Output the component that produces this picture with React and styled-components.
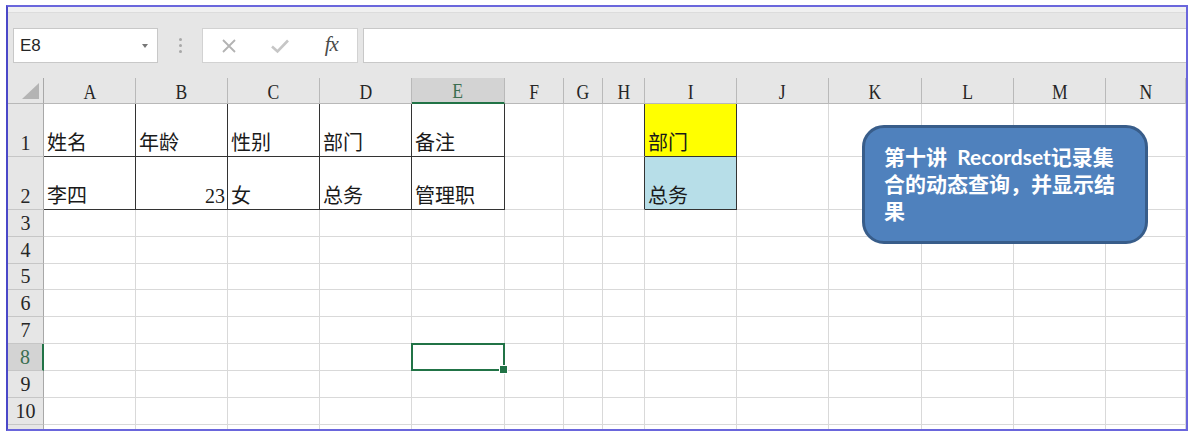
import React from 'react';
import styled, { createGlobalStyle, css } from 'styled-components';

const GlobalStyle = createGlobalStyle`
  * { box-sizing: border-box; }
  html, body { margin: 0; padding: 0; background: #fff; }
  body { font-family: "Liberation Sans", "Noto Sans CJK SC", sans-serif; }
`;

const columns = ['A', 'B', 'C', 'D', 'E', 'F', 'G', 'H', 'I', 'J', 'K', 'L', 'M', 'N'];
const colWidths = [36, 92, 92, 92, 92, 93, 59, 39, 42, 92, 92, 93, 92, 92, '1fr'];
const rowHeights = [26, 53, 53, 27, 27, 26, 27, 27, 27, 27, 27, 10];

const cellData = {
  A1: { text: '姓名' },
  B1: { text: '年龄' },
  C1: { text: '性别' },
  D1: { text: '部门' },
  E1: { text: '备注' },
  A2: { text: '李四' },
  B2: { text: '23', right: true },
  C2: { text: '女' },
  D2: { text: '总务' },
  E2: { text: '管理职' },
  I1: { text: '部门', fill: '#ffff00' },
  I2: { text: '总务', fill: '#b7dee8' },
};

const boxed = (col, row) => {
  const c = columns.indexOf(col);
  if (row >= 1 && row <= 2 && c >= 0 && c <= 4) return true;
  if (col === 'I' && (row === 1 || row === 2)) return true;
  return false;
};

const activeCol = 'E';
const activeRow = 8;
const visibleRows = 10;

function App() {
  // one extra row is only partly visible at the bottom edge
  const rows = Array.from({ length: visibleRows + 1 }, (_, i) => i + 1);
  return (
    <>
      <GlobalStyle />
      <Page>
        <Frame>
          <TopStrip />
          <Toolbar>
            <NameBox>
              <span>E8</span>
              <Caret />
            </NameBox>
            <Grip>
              <i />
              <i />
              <i />
            </Grip>
            <FxGroup>
              <FxButton>
                <svg width="16" height="16" viewBox="0 0 16 16">
                  <path d="M2 2 L14 14 M14 2 L2 14" stroke="#b3b3b3" strokeWidth="1.8" fill="none" />
                </svg>
              </FxButton>
              <FxButton>
                <svg width="20" height="16" viewBox="0 0 20 16">
                  <path d="M2 8.5 L7.5 13.5 L18 2.5" stroke="#c6c6c6" strokeWidth="2.6" fill="none" />
                </svg>
              </FxButton>
              <FxButton>
                <FxText>fx</FxText>
              </FxButton>
            </FxGroup>
            <FormulaInput />
          </Toolbar>
          <Sheet>
            <Corner>
              <svg width="20" height="18" viewBox="0 0 20 18">
                <polygon points="2,17 19,17 19,1" fill="#b4b4b4" />
              </svg>
            </Corner>
            {columns.map((c) => (
              <ColHeader key={c} $active={c === activeCol}>
                <Letter>{c}</Letter>
              </ColHeader>
            ))}
            {rows.map((r) => (
              <React.Fragment key={r}>
                <RowHeader $active={r === activeRow}>{r <= visibleRows ? r : ''}</RowHeader>
                {columns.map((c, ci) => {
                  const id = `${c}${r}`;
                  const d = cellData[id] || {};
                  const next = columns[ci + 1];
                  const darkRight = boxed(c, r) || (next && boxed(next, r));
                  const darkBottom = boxed(c, r);
                  return (
                    <Cell
                      key={id}
                      $fill={d.fill}
                      $right={d.right}
                      $darkRight={darkRight}
                      $darkBottom={darkBottom}
                      $selected={c === activeCol && r === activeRow}
                    >
                      {d.text}
                    </Cell>
                  );
                })}
              </React.Fragment>
            ))}
            <Callout>第十讲&nbsp; Recordset记录集合的动态查询，并显示结果</Callout>
          </Sheet>
        </Frame>
      </Page>
    </>
  );
}

const Page = styled.div`
  width: 1200px;
  height: 436px;
  padding: 5px 0 0 6px;
  overflow: hidden;
`;

const Frame = styled.div`
  width: 1182px;
  height: 426px;
  border: 2px solid #6a66dc;
  border-left-color: #4a48c8;
  background: #e6e6e6;
  display: flex;
  flex-direction: column;
  overflow: hidden;
`;

const TopStrip = styled.div`
  height: 6px;
  flex: none;
  background: #f0f0f0;
  border-bottom: 1px solid #dcdcdc;
`;

const Toolbar = styled.div`
  flex: none;
  height: 65px;
  display: flex;
  align-items: flex-start;
  padding: 15px 0 0 5px;
  background: #e6e6e6;
`;

const NameBox = styled.div`
  width: 145px;
  height: 35px;
  background: #fff;
  border: 1px solid #c8c8c8;
  display: flex;
  align-items: center;
  justify-content: space-between;
  padding: 0 9px 0 6px;
  font-family: "Liberation Sans", Arial, sans-serif;
  font-size: 17px;
  color: #262626;
`;

const Caret = styled.span`
  width: 0;
  height: 0;
  border-left: 3.5px solid transparent;
  border-right: 3.5px solid transparent;
  border-top: 4px solid #777;
`;

const Grip = styled.div`
  width: 44px;
  height: 35px;
  display: flex;
  flex-direction: column;
  align-items: center;
  justify-content: center;
  gap: 3px;
  i {
    width: 3px;
    height: 3px;
    background: #a8a8a8;
    border-radius: 50%;
  }
`;

const FxGroup = styled.div`
  width: 156px;
  height: 35px;
  background: #fff;
  border: 1px solid #d2d2d2;
  display: flex;
`;

const FxButton = styled.div`
  flex: 1;
  display: flex;
  align-items: center;
  justify-content: center;
`;

const FxText = styled.span`
  font-family: "Liberation Serif", "Times New Roman", serif;
  font-style: italic;
  font-size: 21px;
  color: #4a4a4a;
  letter-spacing: -1px;
  margin-top: -3px;
`;

const FormulaInput = styled.div`
  flex: 1;
  height: 35px;
  margin-left: 5px;
  background: #fff;
  border: 1px solid #c8c8c8;
  border-right: none;
`;

const Sheet = styled.div`
  position: relative;
  flex: 1;
  display: grid;
  grid-template-columns: ${colWidths.map((w) => (typeof w === 'number' ? `${w}px` : w)).join(' ')};
  grid-template-rows: ${rowHeights.map((h) => `${h}px`).join(' ')};
  background: #fff;
  overflow: hidden;
`;

const Corner = styled.div`
  background: #e6e6e6;
  border-right: 1px solid #a8a8a8;
  border-bottom: 1px solid #b8b8b8;
  display: flex;
  align-items: flex-end;
  justify-content: flex-end;
  padding: 0 3px 3px 0;
`;

const ColHeader = styled.div`
  background: ${(p) => (p.$active ? '#d3d3d3' : '#e6e6e6')};
  border-right: 1px solid #b9b9b9;
  border-bottom: ${(p) => (p.$active ? '2px solid #217346' : '1px solid #b8b8b8')};
  display: flex;
  align-items: center;
  justify-content: center;
  color: ${(p) => (p.$active ? '#3b6e50' : '#262626')};
  padding-top: 2px;
`;

const Letter = styled.span`
  display: inline-block;
  font-family: "Liberation Serif", "Times New Roman", serif;
  font-size: 22px;
  transform: scaleX(0.8);
`;

const RowHeader = styled.div`
  background: ${(p) => (p.$active ? '#d3d3d3' : '#e6e6e6')};
  border-right: ${(p) => (p.$active ? '2px solid #217346' : '1px solid #a8a8a8')};
  border-bottom: 1px solid #c6c6c6;
  display: flex;
  align-items: flex-end;
  justify-content: center;
  font-family: "Liberation Serif", "Times New Roman", serif;
  font-size: 20px;
  line-height: 24px;
  color: ${(p) => (p.$active ? '#3b6e50' : '#262626')};
  padding-bottom: 1px;
  overflow: hidden;
`;

const Cell = styled.div`
  position: relative;
  background: ${(p) => p.$fill || '#fff'};
  border-right: 1px solid ${(p) => (p.$darkRight ? '#333' : '#d9d9d9')};
  border-bottom: 1px solid ${(p) => (p.$darkBottom ? '#333' : '#d9d9d9')};
  display: flex;
  align-items: flex-end;
  justify-content: ${(p) => (p.$right ? 'flex-end' : 'flex-start')};
  padding: 0 2px 0 3px;
  font-family: "Liberation Serif", "Noto Sans CJK SC", serif;
  font-size: 20px;
  line-height: 25px;
  color: #1a1a1a;
  white-space: nowrap;
  ${(p) =>
    p.$selected &&
    css`
      &::after {
        content: '';
        position: absolute;
        left: -1px;
        top: -1px;
        right: -1px;
        bottom: -1px;
        border: 2px solid #217346;
        z-index: 2;
      }
      &::before {
        content: '';
        position: absolute;
        right: -4px;
        bottom: -4px;
        width: 7px;
        height: 7px;
        background: #217346;
        border: 1px solid #fff;
        z-index: 3;
      }
    `}
`;

const Callout = styled.div`
  position: absolute;
  left: 854px;
  top: 47px;
  width: 286px;
  height: 119px;
  background: #4f81bd;
  border: 3px solid #385d8a;
  border-radius: 22px;
  padding: 15px 20px 0 19px;
  color: #fff;
  font-family: Lato, "Noto Sans CJK SC", sans-serif;
  font-weight: 700;
  font-size: 21px;
  line-height: 27px;
  z-index: 5;
`;

export default App;
